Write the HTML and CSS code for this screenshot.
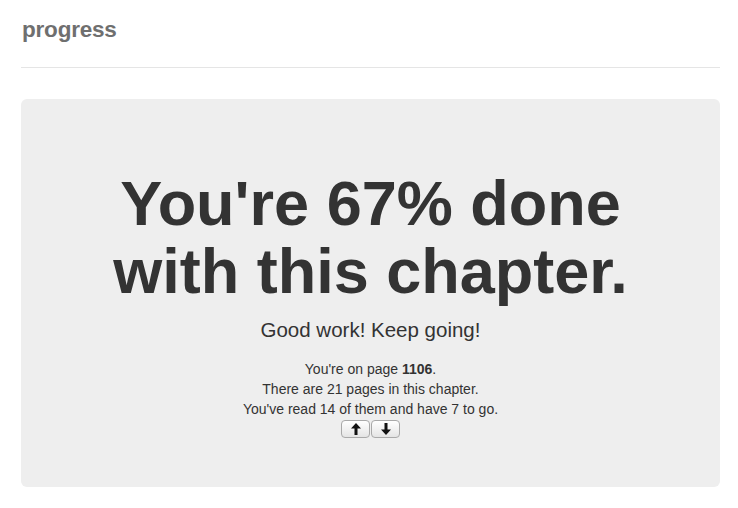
FILE: index.html
```html
<!DOCTYPE html>
<html>
<head>
<meta charset="utf-8">
<link rel="stylesheet" href="styles.css">
</head>
<body>
<div class="page">
  <header class="page-header">
    <h3 class="title">progress</h3>
  </header>
  <section class="hero">
    <h1 class="headline">You're 67% done<br>with this chapter.</h1>
    <p class="lead">Good work! Keep going!</p>
    <div class="details">
      <div>You're on page <b>1106</b>.</div>
      <div>There are 21 pages in this chapter.</div>
      <div>You've read 14 of them and have 7 to go.</div>
    </div>
    <div class="buttons">
      <button class="btn" type="button" aria-label="up">
        <svg width="10" height="12" viewBox="0 0 10 12"><path d="M5 0 L10 5.5 L6.5 5.5 L6.5 12 L3.5 12 L3.5 5.5 L0 5.5 Z" fill="#111"/></svg>
      </button>
      <button class="btn" type="button" aria-label="down">
        <svg width="10" height="12" viewBox="0 0 10 12"><path d="M5 12 L10 6.5 L6.5 6.5 L6.5 0 L3.5 0 L3.5 6.5 L0 6.5 Z" fill="#111"/></svg>
      </button>
    </div>
  </section>
</div>
</body>
</html>
```
FILE: styles.css
```css
html, body {
  margin: 0;
  padding: 0;
  background: #fff;
}
body {
  font-family: "Liberation Sans", Arial, sans-serif;
  color: #333;
  font-size: 14px;
  line-height: 20px;
}
.page {
  padding: 0 18px 0 21px;
}
.page-header {
  padding: 16px 0 23px;
  border-bottom: 1px solid #e5e5e5;
}
.title {
  margin: 0;
  font-size: 22.5px;
  line-height: 28px;
  font-weight: bold;
  color: #6f6f6f;
  padding-left: 1px;
  letter-spacing: -0.2px;
}
.hero {
  margin-top: 31px;
  background: #eeeeee;
  border-radius: 6px;
  height: 388px;
  box-sizing: border-box;
  padding-top: 70px;
  text-align: center;
}
.headline {
  margin: 0;
  font-size: 63px;
  line-height: 68px;
  font-weight: bold;
  color: #333;
}
.lead {
  margin: 10px 0 0;
  font-size: 20.5px;
  line-height: 30px;
  font-weight: normal;
  color: #333;
}
.details {
  margin-top: 14px;
}
.details b {
  font-weight: bold;
}
.buttons {
  margin-top: 1px;
  display: flex;
  justify-content: center;
  gap: 1px;
}
.btn {
  width: 29px;
  height: 18px;
  padding: 0;
  margin: 0;
  border: 1px solid #a9a9a9;
  border-radius: 4px;
  background: linear-gradient(#ffffff, #e4e4e4);
  display: flex;
  align-items: center;
  justify-content: center;
  box-sizing: border-box;
}
.btn svg {
  display: block;
}
```
